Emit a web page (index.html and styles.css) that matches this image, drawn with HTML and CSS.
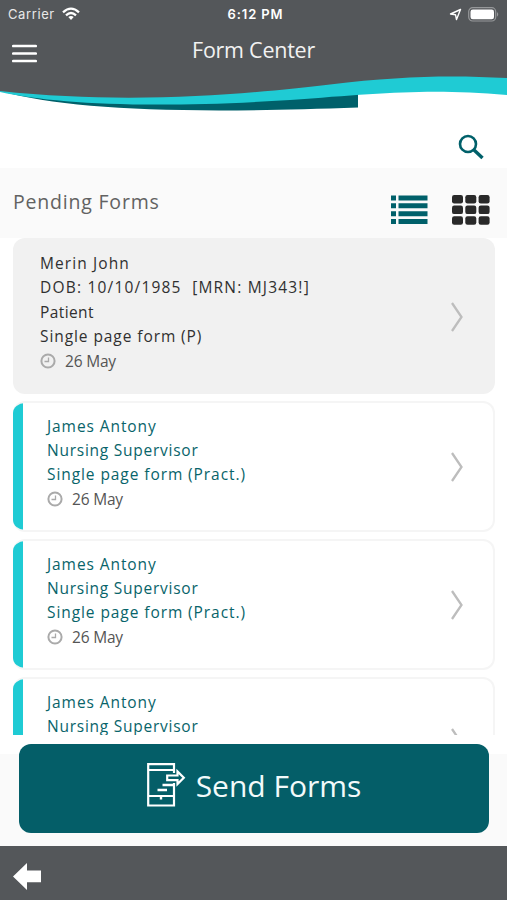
FILE: index.html
```html
<!DOCTYPE html>
<html lang="en">
<head>
<meta charset="utf-8">
<title>Form Center</title>
<link rel="stylesheet" href="styles.css">
</head>
<body>
<div class="app">
  <header class="header">
    <svg class="wave" viewBox="0 0 507 112" width="507" height="112">
      <path fill="#00606a" d="M0 91C70 110 180 114 358 107.500V92H0Z"/>
      <path fill="#1fcbd4" d="M0 92C55 104 150 109 290 100C380 93 430 88 507 95V70H0Z"/>
      <path fill="#54575a" d="M0 0H507V78C450 75 400 76 330 84.500C250 94 130 105 0 91Z"/>
    </svg>
    <div class="status">
      <div class="status-left"><span class="carrier">Carrier</span>
        <svg width="18" height="14" viewBox="0 0 18 14" fill="none" stroke="#fff" stroke-width="2.300"><path d="M1 5.300Q9-2 17 5.300M4 8.300Q9 3.800 14 8.300"/><path d="M6.300 10Q9 7.800 11.700 10L9 13Z" fill="#fff" stroke="none"/></svg>
      </div>
      <div class="clock">6:12 PM</div>
      <div class="status-right">
        <svg width="13" height="13" viewBox="0 0 13 13" fill="none" stroke="#fff" stroke-width="1.400" stroke-linejoin="round"><path d="M11.500 1.500L1.500 6L6.500 6.700L7.500 11.500Z"/></svg>
        <svg width="32" height="15" viewBox="0 0 32 15"><rect x=".7" y=".7" width="27" height="13.300" rx="4" fill="none" stroke="#96989a" stroke-width="1.200"/><rect x="2.500" y="2.500" width="23.500" height="9.700" rx="2.300" fill="#fff"/><path d="M29 5Q31.500 7.300 29 9.700Z" fill="#96989a"/></svg>
      </div>
    </div>
    <div class="titlebar">
      <svg class="menu" width="25" height="20" viewBox="0 0 25 20" stroke="#fff" stroke-width="2.700" stroke-linecap="round"><path d="M1.300 2H23.700M1.300 9.500H23.700M1.300 17H23.700"/></svg>
      <h1>Form Center</h1>
    </div>
  </header>
  <div class="search">
    <svg width="26" height="26" viewBox="0 0 26 26" fill="none" stroke="#00606a"><circle cx="10" cy="10" r="8" stroke-width="2.600"/><path d="M15.500 15.500L24.500 24" stroke-width="3.400"/></svg>
  </div>
  <div class="section">
    <h2>Pending Forms</h2>
    <svg class="list-icon" width="38" height="30" viewBox="0 0 38 30" fill="#00606a"><path d="M1 .5h5v5H1zM8.500 .5h29v5H8.500zM1 8.300h5v5H1zM8.500 8.300h29v5H8.500zM1 16.200h5v5H1zM8.500 16.200h29v5H8.500zM1 24h5v5H1zM8.500 24h29v5H8.500z"/></svg>
    <svg width="38" height="30" viewBox="0 0 38 30" fill="#292929"><rect width="11" height="8.500" rx="2.200"/><rect x="13.300" width="11" height="8.500" rx="2.200"/><rect x="26.600" width="11" height="8.500" rx="2.200"/><rect y="10.600" width="11" height="8.500" rx="2.200"/><rect x="13.300" y="10.600" width="11" height="8.500" rx="2.200"/><rect x="26.600" y="10.600" width="11" height="8.500" rx="2.200"/><rect y="21.200" width="11" height="8.500" rx="2.200"/><rect x="13.300" y="21.200" width="11" height="8.500" rx="2.200"/><rect x="26.600" y="21.200" width="11" height="8.500" rx="2.200"/></svg>
  </div>
  <main class="list">
    <article class="card patient">
      <div class="info">
        <p class="name">Merin John</p><p class="dob">DOB: 10/10/1985&nbsp; [MRN: MJ343!]</p><p class="role">Patient</p><p>Single page form (P)</p>
        <p class="date"><svg class="time" viewBox="0 0 16 16"><circle cx="8" cy="8" r="6.600"/><path d="M8.500 4.500V8.500H4.500"/></svg><span>26 May</span></p>
      </div>
      <svg class="chevron" viewBox="0 0 14 32"><path d="M2 2L11.500 16L2 30"/></svg>
    </article>
    <article class="card staff">
      <div class="info">
        <p>James Antony</p><p class="job">Nursing Supervisor</p><p>Single page form (Pract.)</p>
        <p class="date"><svg class="time" viewBox="0 0 16 16"><circle cx="8" cy="8" r="6.600"/><path d="M8.500 4.500V8.500H4.500"/></svg><span>26 May</span></p>
      </div>
      <svg class="chevron" viewBox="0 0 14 32"><path d="M2 2L11.500 16L2 30"/></svg>
    </article>
    <article class="card staff">
      <div class="info">
        <p>James Antony</p><p class="job">Nursing Supervisor</p><p>Single page form (Pract.)</p>
        <p class="date"><svg class="time" viewBox="0 0 16 16"><circle cx="8" cy="8" r="6.600"/><path d="M8.500 4.500V8.500H4.500"/></svg><span>26 May</span></p>
      </div>
      <svg class="chevron" viewBox="0 0 14 32"><path d="M2 2L11.500 16L2 30"/></svg>
    </article>
    <article class="card staff">
      <div class="info">
        <p>James Antony</p><p class="job">Nursing Supervisor</p>
      </div>
      <svg class="chevron" viewBox="0 0 14 32"><path d="M2 2L11.500 16L2 30"/></svg>
    </article>
  </main>
  <div class="actions">
    <button class="send">
      <svg width="39" height="44" viewBox="0 0 39 44" fill="none" stroke="#fff" stroke-width="2.200"><path d="M27 10V1.200H1.200V42.500H27V20M1.200 7H27M1.200 33H27"/><path d="M14 33V36.500M15.500 22H27M10.500 27H20" stroke-width="2.400"/><path fill="#045e68" d="M20.200 12.500H30.500V8.500L36.800 14.800L30.500 21V17.200H20.200Z"/></svg>
      <span>Send Forms</span>
    </button>
  </div>
  <footer class="footer">
    <svg width="28" height="27" viewBox="0 0 28 27" fill="#fff"><path d="M0 13.500L14 0V7.500H28V19.300H14V27Z"/></svg>
  </footer>
</div>
</body>
</html>
```
FILE: styles.css
```css
* { box-sizing: border-box; }
body { margin: 0; background: #fff; font-family: "Open Sans", "Noto Sans", sans-serif; }
h1, h2, p { margin: 0; font-weight: 400; }
svg { display: block; flex: none; }
.app { width: 507px; height: 900px; display: flex; flex-direction: column; overflow: hidden; }
.header { position: relative; height: 112px; flex: none; color: #fff; }
.wave { position: absolute; left: 0; top: 0; }
.status { position: relative; height: 28px; padding: 0 7px 0 8px; display: grid; grid-template-columns: 1fr auto 1fr; align-items: center; font-family: Inter, sans-serif; font-size: 13px; }
.status-left { display: flex; align-items: center; gap: 7px; }
.carrier { color: #e8e8e8; letter-spacing: .6px; }
.clock { font-weight: 600; letter-spacing: .9px; padding-left: 3px; }
.status-right { display: flex; justify-content: flex-end; align-items: center; gap: 6px; }
.titlebar { position: relative; height: 50px; padding: 0 12px; display: grid; grid-template-columns: 60px 1fr 60px; align-items: center; }
.menu { margin-top: 1px; }
h1 { text-align: center; font-size: 21.5px; line-height: 30px; padding-bottom: 6px; letter-spacing: -.25px; color: #f2f2f2; }
.search { height: 56px; flex: none; display: flex; justify-content: flex-end; padding: 22px 23px 0 0; }
.section { height: 70px; flex: none; display: flex; align-items: flex-start; gap: 24px; padding: 27px 17px 0 13px; background: #fafafa; }
h2 { flex: 1; font-size: 19.5px; line-height: 26px; letter-spacing: .8px; color: #626262; margin-top: -6px; }
.list { height: 497px; flex: none; overflow: hidden; padding: 0 12px 0 13px; display: flex; flex-direction: column; gap: 7px; }
.card { display: flex; flex: none; justify-content: space-between; align-items: center; border-radius: 12px; }
.info { align-self: flex-start; font-size: 15.5px; line-height: 24.4px; letter-spacing: .92px; white-space: nowrap; }
.name { letter-spacing: 1.1px; }
.dob { letter-spacing: 1.2px; }
.role { letter-spacing: .4px; }
.job { letter-spacing: .75px; }
.patient { height: 156px; background: #f1f1f1; color: #303030; padding: 0 31px 0 27px; }
.patient .info { padding-top: 13px; }
.patient .chevron { margin-top: 2px; }
.staff { position: relative; height: 131px; border: 2px solid #f5f5f5; color: #08646a; padding: 0 29px 0 32px; overflow: hidden; border-left: 0; }
.staff::before { content: ""; position: absolute; left: 0; top: -2px; bottom: -2px; width: 10px; background: #1fcbd4; }
.staff .info { padding: 10.6px 0 0 2px; }
.date { display: flex; align-items: center; gap: 9px; color: #555; letter-spacing: -.2px; }
.time { width: 16px; height: 16px; fill: none; stroke: #aaa; stroke-width: 2; }
.time path { stroke-width: 1.3; }
.chevron { width: 14px; height: 32px; fill: none; stroke: #bdbdbd; stroke-width: 2.3; }
.actions { height: 111px; flex: none; padding: 9px 18px 0 19px; background: linear-gradient(#fff 19px, #fafafa 19px); }
.send { width: 470px; height: 89px; border: 0; border-radius: 12px; padding: 0 0 8px; background: #045e68; color: #f2fafa; display: flex; align-items: center; justify-content: center; gap: 10px; font: 400 30px/42px "Open Sans", sans-serif; }
.send span { padding-top: 2px; }
.footer { height: 54px; flex: none; padding: 17px 13px; background: #54575a; }
```
